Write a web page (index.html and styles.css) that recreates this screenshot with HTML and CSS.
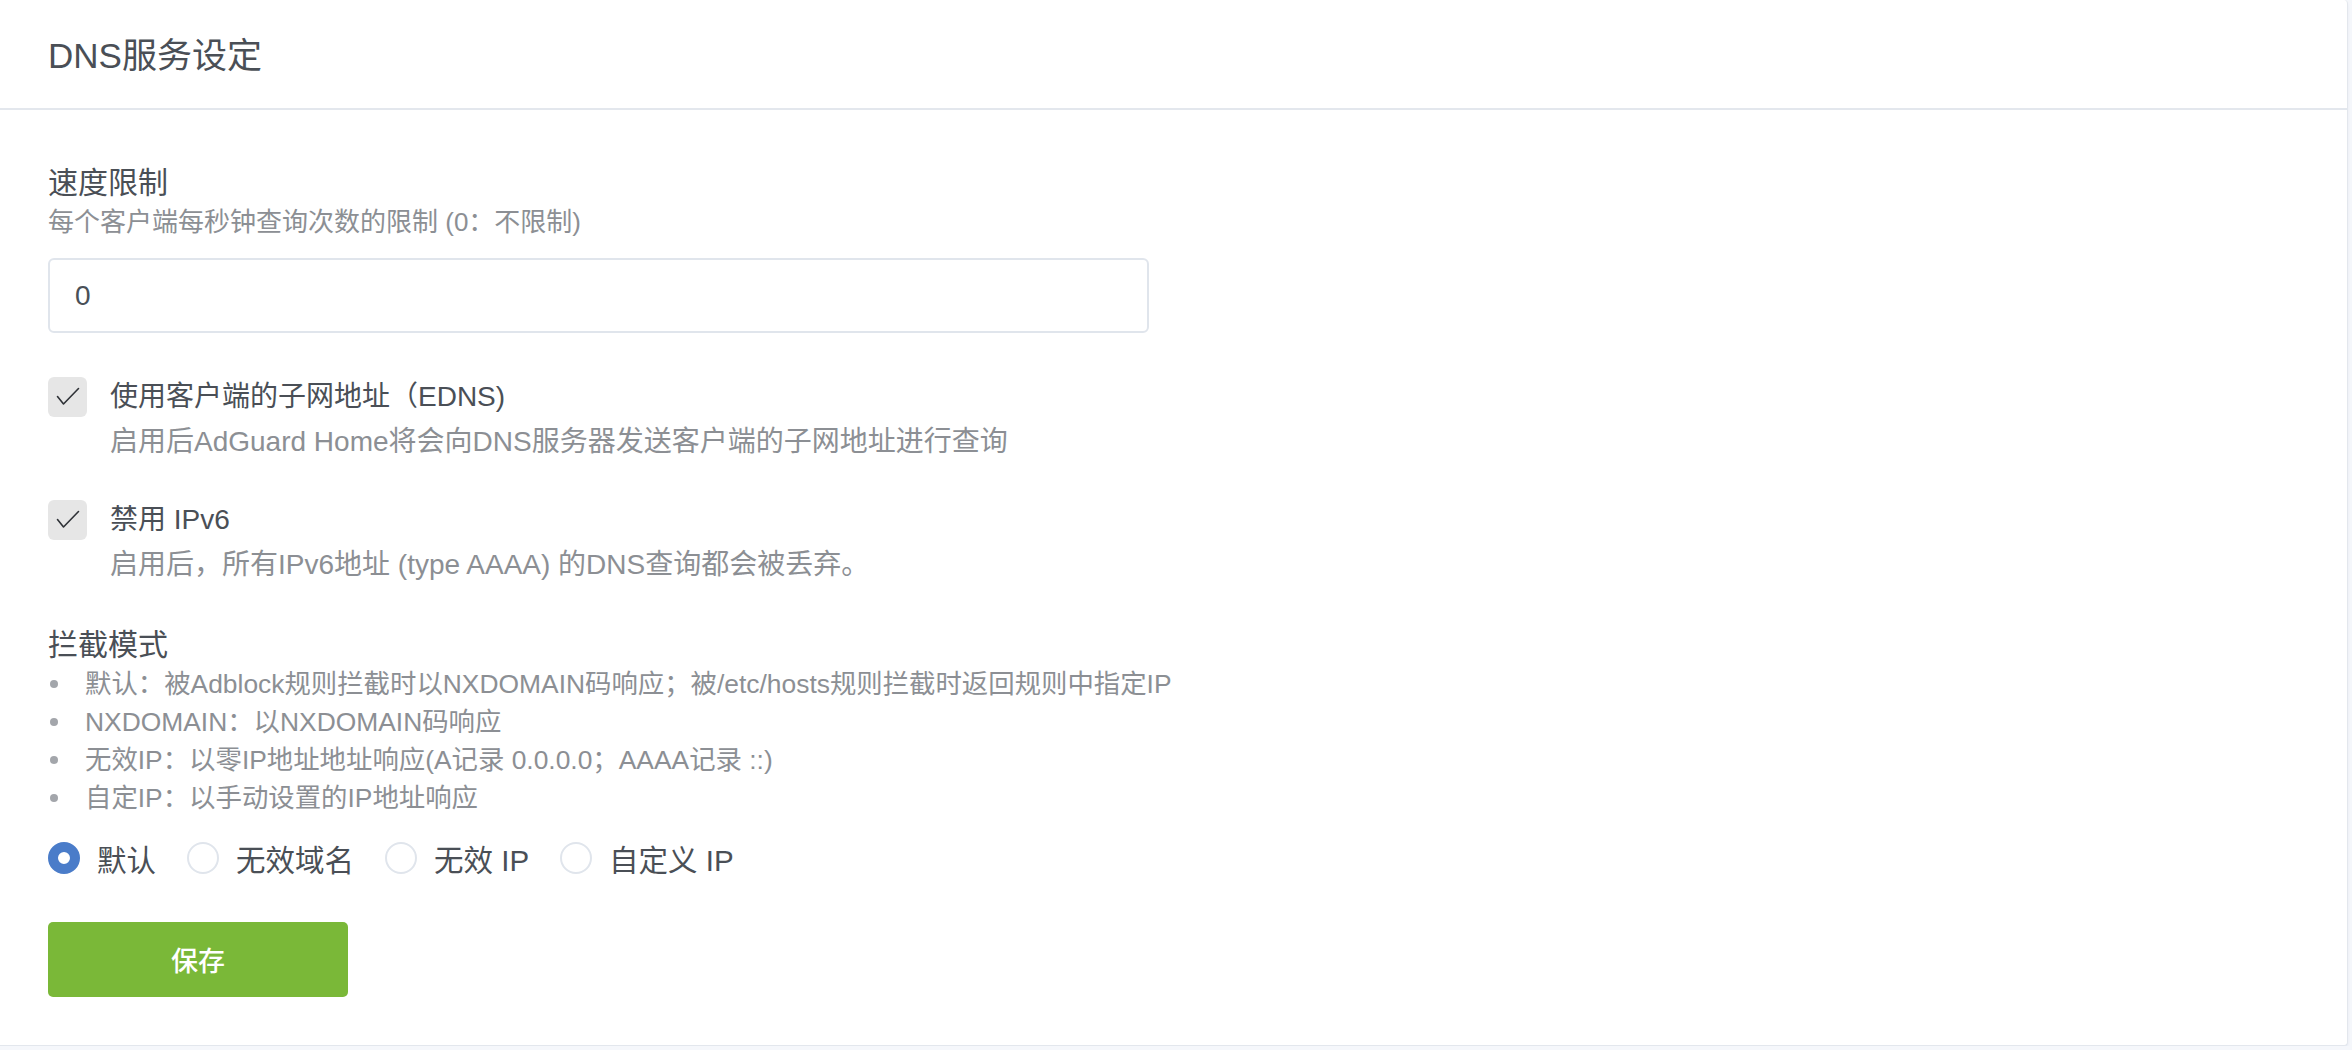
FILE: index.html
```html
<!DOCTYPE html>
<html lang="zh-CN">

<head>
    <meta charset="UTF-8">
    <meta name="viewport" content="width=device-width, initial-scale=1.0">
    <title>DNS服务设定</title>
    <link rel="stylesheet" href="styles.css">
</head>

<body>
    <div class="card">
        <div class="card-header">
            <h3 class="card-title">DNS服务设定</h3>
        </div>

        <div class="card-body">
            <div class="field">
                <div class="field-label">速度限制</div>
                <div class="field-hint">每个客户端每秒钟查询次数的限制 (0：不限制)</div>
                <input class="field-input" type="text" value="0">
            </div>

            <label class="check">
                <span class="check-box">
                    <svg width="39" height="40" viewBox="0 0 39 40">
                        <polyline points="9.5,19.5 15.5,27 30.5,11.5" fill="none" stroke="#2f3237" stroke-width="1.6" stroke-linecap="round" stroke-linejoin="round" />
                    </svg>
                </span>
                <span class="check-text">
                    <span class="check-title">使用客户端的子网地址（EDNS)</span>
                    <span class="check-desc">启用后AdGuard Home将会向DNS服务器发送客户端的子网地址进行查询</span>
                </span>
            </label>

            <label class="check check-second">
                <span class="check-box">
                    <svg width="39" height="40" viewBox="0 0 39 40">
                        <polyline points="9.5,19.5 15.5,27 30.5,11.5" fill="none" stroke="#2f3237" stroke-width="1.6" stroke-linecap="round" stroke-linejoin="round" />
                    </svg>
                </span>
                <span class="check-text">
                    <span class="check-title">禁用 IPv6</span>
                    <span class="check-desc">启用后，所有IPv6地址 (type AAAA) 的DNS查询都会被丢弃。</span>
                </span>
            </label>

            <div class="mode">
                <div class="field-label">拦截模式</div>
                <ul class="mode-list">
                    <li>默认：被Adblock规则拦截时以NXDOMAIN码响应；被/etc/hosts规则拦截时返回规则中指定IP</li>
                    <li>NXDOMAIN：以NXDOMAIN码响应</li>
                    <li>无效IP：以零IP地址地址响应(A记录 0.0.0.0；AAAA记录 ::)</li>
                    <li>自定IP：以手动设置的IP地址响应</li>
                </ul>
            </div>

            <div class="radios">
                <label class="radio"><span class="radio-dot radio-on"></span>默认</label>
                <label class="radio"><span class="radio-dot"></span>无效域名</label>
                <label class="radio"><span class="radio-dot"></span>无效 IP</label>
                <label class="radio"><span class="radio-dot"></span>自定义 IP</label>
            </div>

            <button class="btn-save">保存</button>
        </div>
    </div>
</body>

</html>
```

FILE: styles.css
```css
body {
    margin: 0;
    background-color: #f5f7fb;
    font-family: "Liberation Sans", "Noto Sans CJK SC", sans-serif;
    color: #495057;
}

.card {
    width: 2348px;
    height: 1046px;
    box-sizing: border-box;
    background-color: #fff;
    border: 1px solid #e3e7ed;
    border-top: none;
    border-left: none;
    border-radius: 0 4px 4px 0;
    box-shadow: 0 2px 3px rgba(0, 40, 100, 0.06);
}

.card-header {
    height: 110px;
    box-sizing: border-box;
    padding: 4px 48px 0;
    display: flex;
    align-items: center;
    border-bottom: 2px solid #e3e7ed;
}

.card-title {
    margin: 0;
    font-size: 35px;
    font-weight: 400;
    line-height: 40px;
    color: #4a4f56;
}

.card-body {
    padding: 55px 48px 0;
}

.field-label {
    font-size: 30px;
    line-height: 36px;
    color: #4a4f56;
}

.field-hint {
    margin-top: 5px;
    font-size: 26px;
    line-height: 32px;
    color: #8c8f94;
}

.field-input {
    display: block;
    margin-top: 20px;
    width: 1101px;
    height: 75px;
    box-sizing: border-box;
    padding: 0 25px;
    border: 2px solid #e0e5ec;
    border-radius: 6px;
    font-family: inherit;
    font-size: 28px;
    color: #495057;
    outline: none;
}

.check {
    display: flex;
    gap: 23px;
    margin-top: 44px;
}

.check-second {
    margin-top: 40px;
}

.check-box {
    width: 39px;
    height: 40px;
    flex: none;
    background-color: #e6e6e6;
    border-radius: 6px;
}

.check-box svg {
    display: block;
}

.check-text {
    display: flex;
    flex-direction: column;
}

.check-title {
    font-size: 28px;
    line-height: 40px;
    color: #4a4f56;
}

.check-desc {
    margin-top: 7px;
    font-size: 28px;
    line-height: 36px;
    color: #8c8f94;
}

.mode {
    margin-top: 44px;
}

.mode-list {
    list-style: none;
    margin: 2px 0 0;
    padding: 0;
}

.mode-list li {
    display: flex;
    align-items: center;
    gap: 27px;
    padding-left: 2px;
    font-size: 26.4px;
    line-height: 38px;
    color: #8c8f94;
}

.mode-list li::before {
    content: "";
    width: 8px;
    height: 8px;
    flex: none;
    border-radius: 50%;
    background-color: #a3a6ab;
}

.radios {
    display: flex;
    gap: 31px;
    margin-top: 21px;
    height: 40px;
    align-items: center;
}

.radio {
    display: flex;
    align-items: center;
    gap: 17px;
    font-size: 29.5px;
    color: #4a4f56;
}

.radio-dot {
    width: 32px;
    height: 32px;
    box-sizing: border-box;
    border: 2px solid #e0e5ec;
    border-radius: 50%;
    background-color: #fff;
}

.radio-on {
    border: 10px solid #4a7cc9;
}

.btn-save {
    display: block;
    margin-top: 44px;
    width: 300px;
    height: 75px;
    border: none;
    border-radius: 5px;
    background-color: #7ab838;
    color: #fff;
    font-family: inherit;
    font-size: 27px;
    font-weight: 500;
}
```
